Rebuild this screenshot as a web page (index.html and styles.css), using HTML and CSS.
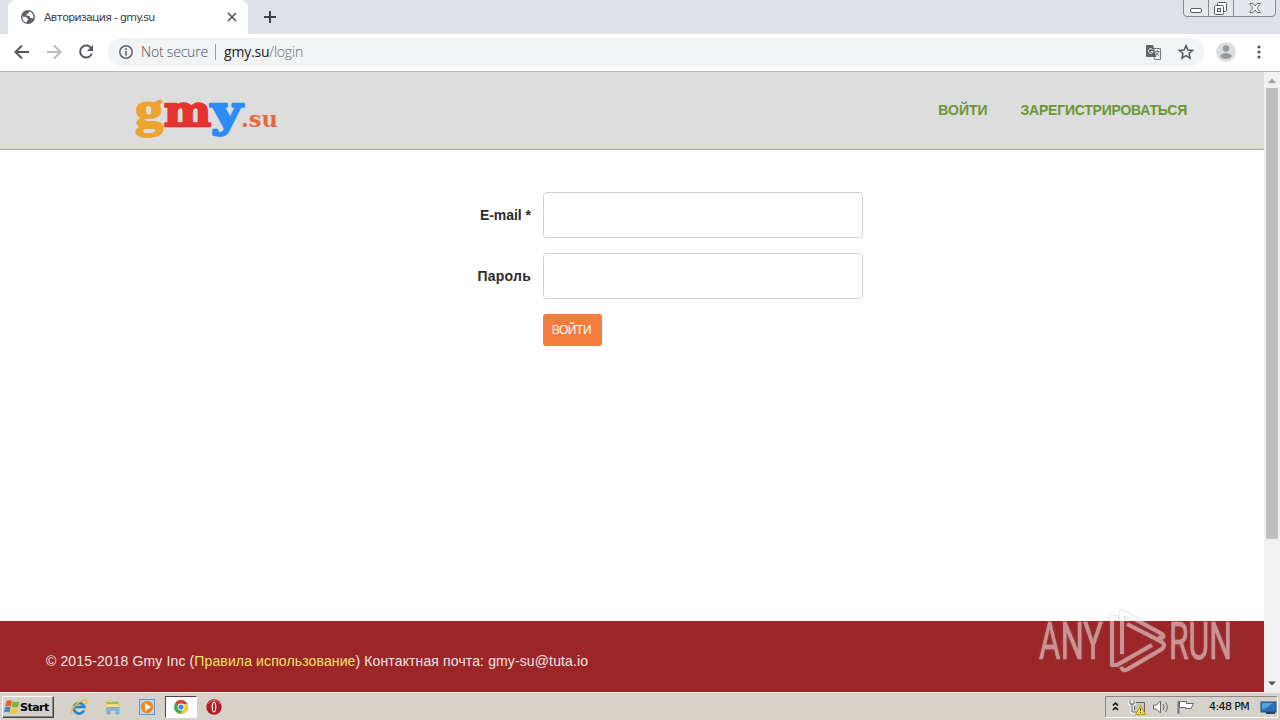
FILE: index.html
```html
<!DOCTYPE html>
<html lang="ru">
  <head>
    <meta charset="utf-8">
    <title>Авторизация - gmy.su</title>
    <link rel="stylesheet" href="styles.css">
  </head>

  <body>

  <div class="tabs">
    <div class="tab">
      <svg class="globe" width="14" height="14" viewBox="0 0 14 14">
        <circle cx="7" cy="7" r="7" fill="#5f6368"/>
        <path d="M8 1.5 L7.5 3.5 L5.5 4 L5.5 5.5 L8.5 6 L9.5 8 L12.5 8.2 A5.6 5.6 0 0 0 8 1.5Z M1.4 6.5 L5 7 L7 9 L6.5 10.5 L5.5 12.5 A5.6 5.6 0 0 1 1.4 6.5Z" fill="#fff"/>
      </svg>
      <span class="tab-title">Авторизация - gmy.su</span>
      <svg class="close" width="10" height="10" viewBox="0 0 10 10"><path d="M1 1 L9 9 M9 1 L1 9" stroke="#55595e" stroke-width="1.7"/></svg>
    </div>
    <svg class="plus" width="12" height="12" viewBox="0 0 12 12"><path d="M6 0 V12 M0 6 H12" stroke="#3c4043" stroke-width="2"/></svg>
    <svg class="win-buttons" width="94" height="18" viewBox="0 0 94 18">
      <path d="M.5 0 V13 Q.5 16.5 4 16.5 H89 Q92.5 16.5 92.5 13 V0 M25.500 0 V16 M50.500 0 V16" fill="#e4e7ed" stroke="#858a93"/>
      <rect x="7.500" y="8.500" width="11" height="4" rx="1.500" fill="#fff" stroke="#555a64"/>
      <rect x="34.500" y="2.500" width="9" height="9" rx="1" fill="#fff" stroke="#555a64"/>
      <rect x="31.500" y="5.500" width="9" height="9" rx="1" fill="#fff" stroke="#555a64"/>
      <rect x="34.500" y="8.500" width="3" height="3" fill="#e4e7ed" stroke="#555a64"/>
      <path d="M66.500 3.500 H70 L72 6 L74 3.500 H77.500 L74.200 8 L77.500 12.500 H74 L72 10 L70 12.500 H66.500 L69.800 8Z" fill="#fff" stroke="#666b75"/>
    </svg>
  </div>

  <div class="toolbar">
    <svg class="nav" width="108" height="37" viewBox="0 0 108 37" fill="none" stroke="#55595e" stroke-width="2">
      <path d="M29 18 H16.500 M22 11.500 L15.500 18 L22 24.500"/>
      <path d="M47 18 H59.500 M54 11.500 L60.500 18 L54 24.500" stroke="#babcbe"/>
      <path d="M91.300 14.500 A6 6 0 1 0 91.800 19.500"/>
      <path d="M93 11 V17 H87Z" fill="#55595e" stroke="none"/>
    </svg>
    <div class="omnibox">
      <svg width="14" height="14" viewBox="0 0 14 14"><circle cx="7" cy="7" r="6.200" fill="none" stroke="#5f6368" stroke-width="1.500"/><path d="M7 6 V10.500 M7 3.300 V5" stroke="#5f6368" stroke-width="1.600"/></svg>
      <span class="insecure">Not secure</span>
      <span class="divider"></span>
      <span class="url">gmy.su<span>/login</span></span>
      <svg class="translate" width="15" height="15" viewBox="0 0 15 15">
        <path d="M6.500 3.500 H14.500 V14.500 H8.500Z" fill="#f4f4f5" stroke="#74787c"/>
        <path d="M1 0 H7 L10.300 12 H1 Q0 12 0 11 V1 Q0 0 1 0Z" fill="#5f6368"/>
        <path d="M6.500 4.500 A2.300 2.300 0 1 0 7 6.500 H4.800" fill="none" stroke="#fff"/>
        <path d="M9 6.500 H13.500 M11.300 5.200 V6.500 M12.700 6.500 Q12.200 9 9.800 10.500 M10 7.500 L12.800 10.800" fill="none" stroke="#74787c"/>
      </svg>
      <svg class="star" width="16" height="16" viewBox="0 0 16 16"><path d="M8 1.600 L9.900 6 L14.600 6.400 L11 9.500 L12.100 14.100 L8 11.700 L3.900 14.100 L5 9.500 L1.400 6.400 L6.100 6Z" fill="none" stroke="#55595e" stroke-width="1.500"/></svg>
    </div>
    <svg class="avatar" width="20" height="20" viewBox="0 0 20 20"><circle cx="10" cy="10" r="10" fill="#dddedf"/><circle cx="10" cy="6.500" r="3.200" fill="#97999c"/><ellipse cx="10" cy="14" rx="5.800" ry="2.900" fill="#97999c"/></svg>
    <svg class="dots" width="4" height="14" viewBox="0 0 4 14" fill="#55595e"><circle cx="2" cy="2" r="1.600"/><circle cx="2" cy="7" r="1.600"/><circle cx="2" cy="12" r="1.600"/></svg>
  </div>

  <div class="window">
    <div class="page">
      <div class="header">
        <svg class="logo" width="150" height="56" viewBox="0 0 150 56">
          <g font-family="DejaVu Serif" font-weight="bold" stroke-linejoin="round">
            <text x="2" y="41" font-family="Liberation Serif" font-size="50" textLength="28" lengthAdjust="spacingAndGlyphs" fill="#eda32f" stroke="#eda32f" stroke-width="2">g</text>
            <text x="31" y="41" font-size="43" textLength="47" lengthAdjust="spacingAndGlyphs" fill="#e5322f" stroke="#e5322f" stroke-width="2.5">m</text>
            <text x="78" y="41" font-size="43" textLength="31" lengthAdjust="spacingAndGlyphs" fill="#2b8cf8" stroke="#2b8cf8" stroke-width="2.5">y</text>
            <text x="108" y="42" font-size="22" textLength="37" lengthAdjust="spacingAndGlyphs" fill="#e3693c">.su</text>
          </g>
        </svg>
        <div class="menu">
          <a>ВОЙТИ</a>
          <a class="register">ЗАРЕГИСТРИРОВАТЬСЯ</a>
        </div>
      </div>

      <form class="login">
        <label class="email-label" for="email">E-mail *</label>
        <input id="email" type="text">
        <label for="password">Пароль</label>
        <input id="password" type="password">
        <button type="button">ВОЙТИ</button>
      </form>

      <div class="footer">
        <p>© 2015-2018 Gmy Inc (<a>Правила использование</a>) Контактная почта: gmy-su@tuta.io</p>
      </div>
    </div>

    <div class="scrollbar">
      <svg width="16" height="16" viewBox="0 0 16 16"><path d="M4 11 L8 6.500 L12 11Z" fill="#a0a0a0"/></svg>
      <div class="thumb"></div>
      <svg class="down" width="16" height="16" viewBox="0 0 16 16"><path d="M4 5.500 H12 L8 9.500Z" fill="#505050"/></svg>
    </div>
  </div>

  <svg class="watermark" width="200" height="70" viewBox="0 0 200 70">
    <g font-family="Roboto" font-size="51" fill="#fff" stroke="#fff" stroke-width=".6">
      <text x="2" y="52" textLength="64" lengthAdjust="spacingAndGlyphs">ANY</text>
      <text x="132" y="52" textLength="63" lengthAdjust="spacingAndGlyphs">RUN</text>
    </g>
    <g fill="none" stroke="#fff" stroke-width="4" stroke-linejoin="round">
      <path d="M81 11 H75 V58 H80 L115 38"/>
      <path d="M85 47 V5 L125 27 Q129 31 121 31"/>
      <path d="M84 60 Q86 65 91 62 L125 42 Q129 38 125 35 L90 17"/>
    </g>
  </svg>

  <div class="taskbar">
    <div class="start">
      <svg width="16" height="16" viewBox="0 0 16 16">
        <path d="M2.500 2 Q5 .5 8 2 L6.800 7.500 Q4 6.300 1.200 7.500Z" fill="#e9602c"/>
        <path d="M8.800 2.300 Q12 4 15.500 2.300 L14.200 7.800 Q11 9.400 7.600 7.800Z" fill="#79b83e"/>
        <path d="M1 8.300 Q4 7 6.600 8.300 L5.400 13.500 Q3 12.200 0 13.500Z" fill="#3d86d2"/>
        <path d="M7.500 8.700 Q11 10.300 14 8.700 L12.700 14 Q9.500 15.500 6.200 14Z" fill="#f6c52e"/>
      </svg>
      <b>Start</b>
    </div>

    <div class="quick">
      <svg width="18" height="18" viewBox="0 0 18 18">
        <path d="M14 12.500 A5.300 5.300 0 1 1 14.300 9 H5" fill="none" stroke="#2684cf" stroke-width="2.700"/>
        <path d="M2 16 C-1 12 10 1 16 2 Q18 3 15 7" fill="none" stroke="#e9c33d" stroke-width="1.500"/>
      </svg>
      <svg width="18" height="18" viewBox="0 0 18 18">
        <path d="M2 4 L7 2 L9 4 H15 V12 H2Z" fill="#f4dc80" stroke="#d8b84f" stroke-width=".7"/>
        <path d="M3 5 H14" stroke="#71b65a" stroke-width="1.500"/>
        <path d="M3 16 V9.500 H15 V16 H12 V12 H6 V16Z" fill="#7cbfe2" stroke="#5599bd" stroke-width=".6"/>
      </svg>
      <svg width="18" height="18" viewBox="0 0 18 18">
        <rect x="1.500" y="1.500" width="15" height="15" fill="#b8d8f3" stroke="#6199cf"/>
        <circle cx="9" cy="9" r="6.200" fill="#f28b1d"/><path d="M7 5 L13 9 L7 13Z" fill="#fff"/>
      </svg>
    </div>
    <div class="active">
      <svg width="14" height="14" viewBox="0 0 14 14">
        <circle cx="7" cy="7" r="7" fill="#46a851"/>
        <path d="M7 7 L1 3.500 A7 7 0 0 1 13.200 3.800 L7 4Z" fill="#df4435"/>
        <path d="M7 4 H13.200 A7 7 0 0 1 6.500 14 L9.500 8.500Z" fill="#f7ca3c"/>
        <circle cx="7" cy="7" r="3.400" fill="#fff"/><circle cx="7" cy="7" r="2.600" fill="#4a87df"/>
      </svg>
    </div>
    <svg class="opera" width="16" height="16" viewBox="0 0 16 16"><circle cx="8" cy="8" r="7.700" fill="#b51b22"/><path d="M2 5 A7 7 0 0 1 14 5" fill="none" stroke="#df7772"/><ellipse cx="8" cy="8" rx="2.400" ry="5.600" fill="#eee"/><ellipse cx="8" cy="8" rx="1" ry="4.300" fill="#96191d"/></svg>

    <div class="tray">
      <svg width="103" height="20" viewBox="-1 0 103 20">
        <path d="M6 8.500 L8.500 6 L11 8.500 M6 13 L8.500 10.500 L11 13" fill="none" stroke="#000" stroke-width="1.500"/>
        <rect x="27.500" y="5.500" width="10" height="9" fill="#c8c8c4" stroke="#666"/>
        <path d="M23 3 V7 H27 V3 M25 7 V15 H30" fill="none" stroke="#fff" stroke-width="3"/>
        <path d="M23 3 V7 H27 V3 M25 7 V15 H30" fill="none" stroke="#555"/>
        <path d="M33.500 8.500 L38.500 17.500 H28.500Z" fill="#f7e320" stroke="#b49b14"/>
        <path d="M33.500 11.500 V14 M33.500 15 V16" stroke="#333"/>
        <path d="M46.500 8 H49.500 L53.500 4 V16 L49.500 12 H46.500Z" fill="#fff" stroke="#666"/>
        <path d="M56 7 Q58 10 56 13 M58.500 5 Q62 10 58.500 15" fill="none" stroke="#666"/>
        <path d="M71.500 4 V17" stroke="#777" stroke-width="2"/>
        <path d="M72.500 4.500 H79.500 V6.500 H86.500 L84 11.500 H78.500 V10.500 H72.500Z" fill="#fff" stroke="#666"/>
      </svg>
      <span class="clock">4:48 PM</span>
      <svg class="desktop" width="17" height="14" viewBox="0 0 17 14"><rect x="1" y="1" width="15" height="10" fill="#2870bd" stroke="#184e94"/><path d="M2 2 H13 L6 7 L2 8Z" fill="#5da2df"/><path d="M6 11 H15 V13 H6Z" fill="#2b3f58"/></svg>
    </div>
  </div>

  </body>
</html>
```
FILE: styles.css
```css
  * {
    box-sizing: border-box;
  }

  body {
    margin: 0;
    width: 1280px;
    height: 720px;
    overflow: hidden;
    position: relative;
    font-family: "Liberation Sans", sans-serif;
    background-color: white;
  }

  svg {
    display: block;
    flex: none;
  }

  .tabs {
    display: flex;
    height: 34px;
    padding-left: 8px;
    background-color: #dee1e8;
  }

  .tab {
    display: flex;
    align-items: center;
    width: 240px;
    height: 34px;
    padding: 0 11px 0 13px;
    background-color: white;
    border-radius: 8px 8px 0 0;
  }

  .tab-title {
    flex: 1;
    margin-left: 9px;
    font: 11px "DejaVu Sans", sans-serif;
    letter-spacing: -0.72px;
    color: #3c4043;
    white-space: nowrap;
  }

  .plus {
    margin: 11px 0 0 16px;
  }

  .win-buttons {
    margin-left: auto;
    margin-right: 3px;
  }

  .toolbar {
    display: flex;
    height: 38px;
    border-bottom: 1px solid #b5b6b5;
  }

  .omnibox {
    display: flex;
    align-items: center;
    width: 1096px;
    height: 28px;
    margin-top: 4px;
    padding: 0 10px 0 11px;
    border-radius: 14px;
    background-color: #f1f3f4;
    font: 300 14px "Open Sans", sans-serif;
    color: #4e5257;
  }

  .insecure {
    width: 67px;
    margin-left: 8px;
    padding-bottom: 2px;
    letter-spacing: -0.2px;
    white-space: nowrap;
  }

  .divider {
    width: 1px;
    height: 16px;
    margin: 0 8px 0 7px;
    background-color: #9a9da0;
  }

  .url {
    flex: 1;
    padding-bottom: 2px;
    color: #202124;
    font-weight: 400;
    letter-spacing: -0.2px;
  }

  .url span {
    color: #666a6e;
    font-weight: 300;
  }

  .star {
    margin-left: 17px;
  }

  .avatar {
    margin: 8px 0 0 12px;
  }

  .dots {
    margin: 11px 0 0 21px;
  }

  .window {
    display: flex;
    height: 620px;
  }

  .page {
    display: flex;
    flex-direction: column;
    width: 1264px;
  }

  .header {
    display: flex;
    justify-content: space-between;
    height: 78px;
    padding: 13px 77px 0 133px;
    background-color: #dddddd;
    border-bottom: 1px solid #9fb967;
  }

  .logo {
    overflow: visible;
  }

  .menu {
    display: flex;
    gap: 33px;
    padding-top: 17px;
    font-size: 14px;
    font-weight: bold;
    line-height: 16px;
    color: #6b9635;
  }

  .register {
    letter-spacing: -0.23px;
  }

  .login {
    display: grid;
    grid-template-columns: 531px 320px;
    grid-template-rows: 46px 46px 32px;
    column-gap: 12px;
    row-gap: 15px;
    flex: 1;
    padding-top: 42px;
  }

  .login label {
    text-align: right;
    font-size: 14px;
    font-weight: bold;
    line-height: 46px;
    letter-spacing: 0.25px;
    color: #2b2b2b;
  }

  .login .email-label {
    letter-spacing: -0.03px;
  }

  .login input {
    border: 1px solid #d2d2cf;
    border-radius: 4px;
    background-color: white;
  }

  .login button {
    grid-column: 2;
    width: 59px;
    height: 32px;
    padding: 0 2px 0 0;
    border: 0;
    border-radius: 3px;
    background-color: #f47c3c;
    color: white;
    font: 12px "Liberation Sans", sans-serif;
    letter-spacing: -0.4px;
  }

  .footer {
    height: 71px;
    padding-left: 46px;
    background-color: #9c2627;
    color: #f3e4e4;
    font-size: 14px;
    letter-spacing: 0.125px;
  }

  .footer p {
    margin: 32px 0 0;
    line-height: 16px;
  }

  .footer a {
    color: #f5e56b;
  }

  .scrollbar {
    display: flex;
    flex-direction: column;
    width: 16px;
    background-color: #f1f1f1;
  }

  .thumb {
    width: 12px;
    height: 451px;
    margin-left: 2px;
    background-color: #bfbfbf;
  }

  .down {
    margin-top: auto;
  }

  .watermark {
    position: absolute;
    left: 1037px;
    top: 607px;
    opacity: 0.5;
    filter: drop-shadow(0 0 1px #777);
  }

  .taskbar {
    display: flex;
    height: 28px;
    padding: 3px 2px 1px;
    border-top: 1px solid #f4f2ee;
    background-color: #d6d1c9;
  }

  .start {
    display: flex;
    align-items: center;
    width: 52px;
    height: 22px;
    padding-left: 1px;
    border: 1px solid;
    border-color: #fff #444 #444 #fff;
    box-shadow: inset -1px -1px #888;
  }

  .start b {
    font: bold 11px "DejaVu Sans", sans-serif;
    letter-spacing: -0.5px;
    color: black;
  }

  .quick {
    display: flex;
    gap: 16px;
    margin-left: 16px;
    padding-top: 2px;
  }

  .active {
    width: 32px;
    height: 22px;
    margin-left: 9px;
    padding: 3px 8px;
    border: 1px solid;
    border-color: #444 #fff #fff #444;
    background-color: white;
  }

  .opera {
    margin: 3px 0 0 9px;
  }

  .tray {
    display: flex;
    width: 173px;
    height: 22px;
    margin-left: auto;
    border: 1px solid;
    border-color: #888 #fff #fff #888;
  }

  .clock {
    width: 40px;
    font: 11px/20px "DejaVu Sans", sans-serif;
    letter-spacing: -0.6px;
    white-space: nowrap;
    color: black;
  }

  .desktop {
    margin: 4px 0 0 11px;
  }
```
